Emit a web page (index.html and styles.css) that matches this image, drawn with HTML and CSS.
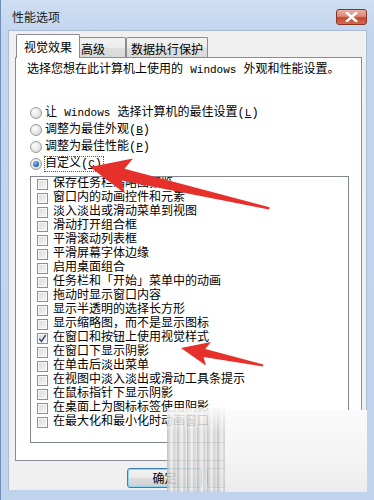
FILE: index.html
```html
<!DOCTYPE html>
<html lang="zh-CN">
<head>
<meta charset="utf-8">
<title>性能选项</title>
<link rel="stylesheet" href="styles.css">
</head>
<body>
<div class="window">
  <div class="titlebar">
    <span class="title">性能选项</span>
    <span class="close"><svg width="13" height="10" viewBox="0 0 13 10"><path d="M2 1 L11 9 M11 1 L2 9" stroke="#fff" stroke-width="2.6" stroke-linecap="square"/></svg></span>
  </div>
  <div class="client">
    <div class="tabs">
      <div class="tab t1 active">视觉效果</div>
      <div class="tab t2">高级</div>
      <div class="tab t3">数据执行保护</div>
    </div>
    <div class="panel">
      <p class="desc">选择您想在此计算机上使用的 <span class="lat">Windows</span> 外观和性能设置。</p>
      <div class="radios">
        <div class="radio"><span class="rb"></span><span>让 <span class="lat">Windows</span> 选择计算机的最佳设置(<u class="lat">L</u>)</span></div>
        <div class="radio"><span class="rb"></span><span>调整为最佳外观(<u class="lat">B</u>)</span></div>
        <div class="radio"><span class="rb"></span><span>调整为最佳性能(<u class="lat">P</u>)</span></div>
        <div class="radio"><span class="rb on"></span><span class="focus">自定义(<u class="lat">C</u>)</span></div>
      </div>
      <div class="list">
        <div class="item"><span class="cb"></span>保存任务栏缩略图预览</div>
        <div class="item"><span class="cb"></span>窗口内的动画控件和元素</div>
        <div class="item"><span class="cb"></span>淡入淡出或滑动菜单到视图</div>
        <div class="item"><span class="cb"></span>滑动打开组合框</div>
        <div class="item"><span class="cb"></span>平滑滚动列表框</div>
        <div class="item"><span class="cb"></span>平滑屏幕字体边缘</div>
        <div class="item"><span class="cb"></span>启用桌面组合</div>
        <div class="item"><span class="cb"></span>任务栏和「开始」菜单中的动画</div>
        <div class="item"><span class="cb"></span>拖动时显示窗口内容</div>
        <div class="item"><span class="cb"></span>显示半透明的选择长方形</div>
        <div class="item"><span class="cb"></span>显示缩略图，而不是显示图标</div>
        <div class="item"><span class="cb"><svg width="9" height="9" viewBox="0 0 9 9"><path d="M1.2 4.6 L3.4 7.4 L7.8 1" fill="none" stroke="#3d4f80" stroke-width="1.5"/></svg></span>在窗口和按钮上使用视觉样式</div>
        <div class="item"><span class="cb"></span>在窗口下显示阴影</div>
        <div class="item"><span class="cb"></span>在单击后淡出菜单</div>
        <div class="item"><span class="cb"></span>在视图中淡入淡出或滑动工具条提示</div>
        <div class="item"><span class="cb"></span>在鼠标指针下显示阴影</div>
        <div class="item"><span class="cb"></span>在桌面上为图标标签使用阴影</div>
        <div class="item"><span class="cb"></span>在最大化和最小化时动画窗口</div>
      </div>
    </div>
    <div class="buttons">
      <button class="btn default">确定</button>
      <button class="btn">取消</button>
      <button class="btn">应用(<u>A</u>)</button>
    </div>
  </div>
  <svg class="arrows" width="374" height="500" viewBox="0 0 374 500">
    <g transform="translate(90 167) rotate(13)">
      <polygon points="0,0 40,-18 34,-6 184,-1.2 184,1.2 34,6 40,18" fill="#e6302b"/>
    </g>
    <g transform="translate(181 348) rotate(12)">
      <polygon points="0,0 28,-12 24,-4 84,-1 84,1 24,4 28,12" fill="#e6302b"/>
    </g>
  </svg>
  <div class="blur-a"></div>
  <div class="blur-b"></div>
</div>
</body>
</html>
```
FILE: styles.css
```css
html, body {
  margin: 0;
  padding: 0;
  background: #c6d8ee;
}

.window {
  position: relative;
  width: 374px;
  height: 500px;
  box-sizing: border-box;
  display: flex;
  flex-direction: column;
  padding-bottom: 10px;
  background: linear-gradient(180deg, #cfdff2 0%, #c3d6ee 30px, #bfd3ec 100%);
  border-left: 1px solid #6f8fb6;
  font-family: "Liberation Mono", "Noto Sans CJK SC", monospace;
  font-size: 12px;
  color: #000;
  overflow: hidden;
}

.titlebar {
  height: 30px;
  flex: none;
  display: flex;
  align-items: center;
  justify-content: space-between;
  box-sizing: border-box;
  padding: 3px 7px 0 11px;
}

.title {
  font-family: "Noto Sans CJK SC", sans-serif;
  font-size: 12px;
  line-height: 14px;
  color: #1a1a1a;
}

.close {
  width: 31px;
  height: 16px;
  box-sizing: border-box;
  border: 1px solid #8a3327;
  border-radius: 3px;
  background: linear-gradient(180deg, #eab0a4 0%, #dc8a79 45%, #c6462f 55%, #d46a4c 100%);
  display: flex;
  align-items: center;
  justify-content: center;
}

.client {
  flex: 1;
  margin: 0 7px 0 7px;
  background: #f0f0f0;
  border: 1px solid #a9bcd4;
  border-bottom: none;
  padding-top: 3px;
  display: flex;
  flex-direction: column;
}

.tabs {
  display: flex;
  align-items: flex-end;
  height: 23px;
  padding-left: 7px;
}

.tab {
  box-sizing: border-box;
  border: 1px solid #898c95;
  border-bottom: none;
  border-radius: 2px 2px 0 0;
  background: linear-gradient(180deg, #f3f3f3 0%, #ebebeb 50%, #dedede 51%, #d9d9d9 100%);
  font-family: "Noto Sans CJK SC", sans-serif;
  font-size: 12px;
  line-height: 14px;
  height: 20px;
  padding-top: 4px;
  white-space: nowrap;
}

.t1 {
  width: 64px;
  text-align: center;
}

.t2 {
  width: 47px;
  margin-left: -1px;
  padding-left: 2px;
  border-left: none;
}

.t3 {
  width: 82px;
  margin-left: 0;
  text-align: center;
}

.tab.active {
  background: #fff;
  height: 24px;
  margin-bottom: -1px;
  padding-top: 5px;
  position: relative;
  z-index: 1;
}

.panel {
  margin: 0 4px 0 6px;
  height: 404px;
  box-sizing: border-box;
  border: 1px solid #898c95;
  background: #fff;
  padding: 5px 12px 0 14px;
}

.desc {
  margin: 0 0 0 -3px;
  line-height: 14px;
  height: 14px;
  white-space: nowrap;
}

.lat {
  font-family: "Liberation Mono", monospace;
  font-size: 11px;
}

.radios {
  margin-top: 27px;
}

.radio {
  height: 17px;
  display: flex;
  align-items: center;
  gap: 3px;
  line-height: 14px;
  white-space: nowrap;
}

.rb {
  width: 12px;
  height: 12px;
  box-sizing: border-box;
  border-radius: 50%;
  border: 1px solid #9a9a9a;
  background: radial-gradient(circle at 35% 35%, #fdfdfd 0%, #e4e4e4 60%, #d0d0d0 100%);
  display: flex;
  align-items: center;
  justify-content: center;
  flex: none;
}

.rb.on::after {
  content: "";
  width: 6px;
  height: 6px;
  border-radius: 50%;
  background: radial-gradient(circle at 40% 35%, #8fc3f0 0%, #2a6fb8 55%, #173f7a 100%);
}

.focus {
  outline: 1px dotted #555;
  outline-offset: 0;
  padding-right: 1px;
}

.list {
  margin-top: 4px;
  height: 267px;
  box-sizing: border-box;
  border: 1px solid #82878f;
  padding: 0 0 0 6px;
  overflow: hidden;
}

.item {
  height: 14px;
  line-height: 14px;
  display: flex;
  align-items: center;
  gap: 5px;
  white-space: nowrap;
}

.cb {
  width: 11px;
  height: 11px;
  box-sizing: border-box;
  border: 1px solid #8f8f8f;
  background: linear-gradient(135deg, #d8d8d8 0%, #ececec 60%, #f6f6f6 100%);
  box-shadow: inset 0 0 0 1px #fafafa;
  display: flex;
  align-items: center;
  justify-content: center;
  flex: none;
}

.buttons {
  display: flex;
  justify-content: flex-end;
  gap: 5px;
  margin-top: 7px;
  padding-right: 4px;
}

.btn {
  width: 75px;
  height: 20px;
  box-sizing: border-box;
  border: 1px solid #707070;
  border-radius: 3px;
  background: linear-gradient(180deg, #f2f2f2 0%, #ebebeb 50%, #dddddd 51%, #cfcfcf 100%);
  font-family: "Noto Sans CJK SC", sans-serif;
  font-size: 12px;
  line-height: 14px;
  padding: 0;
  color: #000;
}

.btn.default {
  border-color: #3c7fb1;
  box-shadow: inset 0 0 0 1px #8fd6f5;
}

.arrows {
  position: absolute;
  left: -1px;
  top: 0;
  pointer-events: none;
}

.blur-a {
  position: absolute;
  left: 166px;
  top: 408px;
  width: 58px;
  height: 84px;
  background:
    linear-gradient(180deg, rgba(250,250,250,0.95) 0%, rgba(250,250,250,0) 30%),
    repeating-linear-gradient(90deg, #b9b9b9 0px, #dcdcdc 3px, #f2f2f2 5px, #c9c9c9 7px, #e9e9e9 10px);
  opacity: 0.85;
}

.blur-b {
  position: absolute;
  left: 224px;
  top: 410px;
  width: 142px;
  height: 82px;
  background:
    linear-gradient(180deg, rgba(251,251,251,0.98) 0%, rgba(244,244,244,0.96) 60%, rgba(236,236,236,0.96) 100%),
    repeating-linear-gradient(90deg, #dddddd 0px, #f4f4f4 6px);
}
```
